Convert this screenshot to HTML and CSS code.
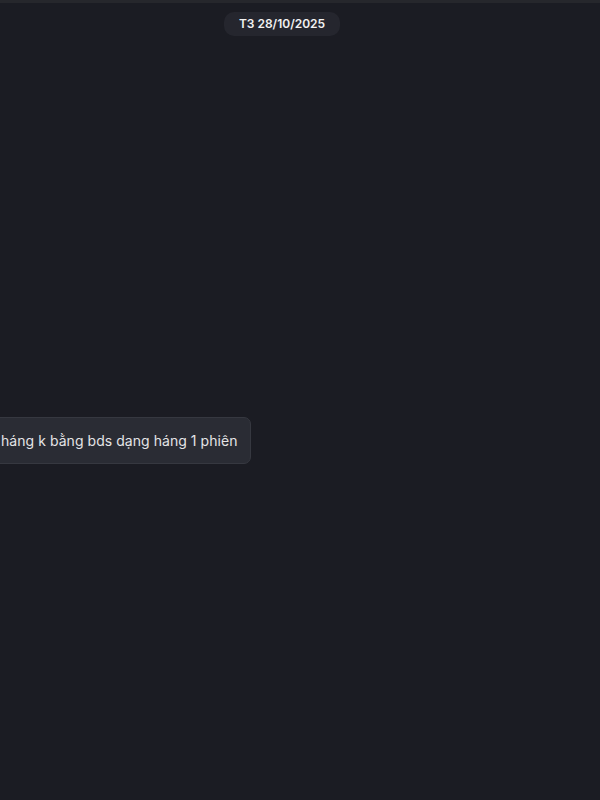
FILE: index.html
```
<!DOCTYPE html>
<html lang="vi">
<head>
<meta charset="utf-8">
<link rel="stylesheet" href="styles.css">
</head>
<body>
<div class="topbar"></div>
<main class="chat">
  <div class="date-row"><span class="date-pill">T3 28/10/2025</span></div>
  <div class="msg-row">
    <div class="bubble">háng k bằng bds dạng háng 1 phiên</div>
  </div>
</main>
</body>
</html>
```
FILE: styles.css
```
html, body {
  margin: 0;
  padding: 0;
  background: #1b1c23;
  height: 100%;
  overflow: hidden;
  font-family: Inter, "Noto Sans", sans-serif;
}
.topbar {
  height: 3px;
  background: #26272c;
}
.chat {
  display: flex;
  flex-direction: column;
}
.date-row {
  display: flex;
  justify-content: center;
  padding-top: 9px;
}
.date-pill {
  background: #25262e;
  color: #f2f2f2;
  font-size: 12px;
  font-weight: 600;
  line-height: 24px;
  padding: 0 15px;
  border-radius: 10px;
  margin-left: -36px;
}
.msg-row {
  display: flex;
  margin-top: 381px;
}
.bubble {
  margin-left: -12px;
  background: #2a2c34;
  border: 1px solid #363840;
  border-radius: 7px;
  color: #e4e4e6;
  font-size: 14px;
  line-height: 20px;
  letter-spacing: 0.05px;
  padding: 13px 12px 12px 12px;
}
```
